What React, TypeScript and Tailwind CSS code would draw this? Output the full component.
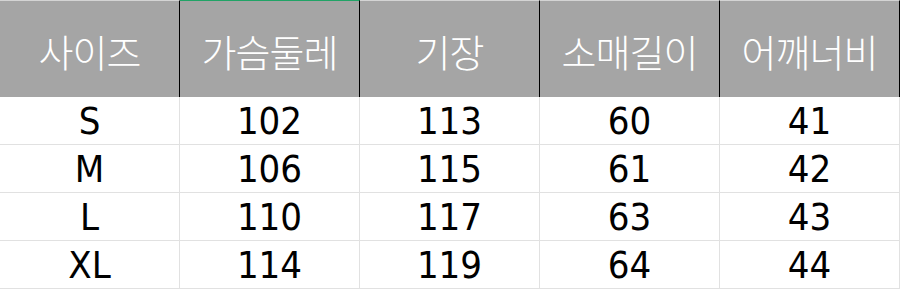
const headers = ["사이즈", "가슴둘레", "기장", "소매길이", "어깨너비"];

const rows = [
  ["S", "102", "113", "60", "41"],
  ["M", "106", "115", "61", "42"],
  ["L", "110", "117", "63", "43"],
  ["XL", "114", "119", "64", "44"],
];

export default function App() {
  return (
    <div className="h-[291px] w-[901px] bg-white">
      <div className="grid w-[900px] grid-cols-[repeat(5,180px)]">
        {headers.map((h, i) => (
          <div
            key={h}
            className={`flex h-[97px] items-center justify-center border-r border-t border-r-black bg-[#a5a5a5] pt-[4px] font-['Noto_Sans_CJK_KR',sans-serif] text-[38px] font-light leading-none tracking-[-1px] text-white ${
              i === 1 ? "border-t-[#21a366]" : "border-t-[#d4d4d4]"
            }`}
          >
            {h}
          </div>
        ))}
        {rows.map((row) =>
          row.map((cell, j) => (
            <div
              key={row[0] + j}
              className="flex h-[48px] items-center justify-center border-b border-r border-[#e1e1e1] font-['DejaVu_Sans_Condensed','Liberation_Sans',sans-serif] text-[38px] leading-none text-black"
            >
              {cell}
            </div>
          ))
        )}
      </div>
    </div>
  );
}
